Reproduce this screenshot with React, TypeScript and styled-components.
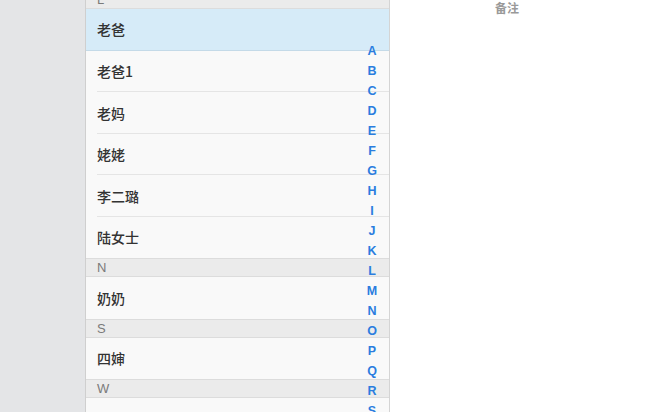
import React from "react"
import styled, { createGlobalStyle } from "styled-components"

const GlobalStyle = createGlobalStyle`
  html, body {
    margin: 0;
    padding: 0;
    overflow: hidden;
    background: #ffffff;
    font-family: "Liberation Sans", "Noto Sans CJK SC", sans-serif;
  }
`

const Page = styled.div`
  display: flex;
  height: 412px;
  width: 659px;
`

const Sidebar = styled.div`
  width: 85px;
  flex-shrink: 0;
  background: #e4e5e7;
`

const ListPanel = styled.div`
  position: relative;
  width: 303px;
  flex-shrink: 0;
  overflow: hidden;
  background: #f9f9f9;
  border-left: 1px solid #cfcfcf;
  border-right: 1px solid #d4d4d4;
`

const Scroller = styled.div`
  margin-top: -10px;
`

const SectionHeader = styled.div`
  box-sizing: border-box;
  height: 19px;
  padding-left: 11px;
  display: flex;
  align-items: center;
  background: #ebebeb;
  border-top: 1px solid #dcdcdc;
  border-bottom: 1px solid #dcdcdc;
  color: #7a7a7a;
  font-size: 13px;
`

const Row = styled.div<{ $active?: boolean; $last?: boolean }>`
  position: relative;
  box-sizing: border-box;
  height: 41.5px;
  padding-left: 11px;
  display: flex;
  align-items: center;
  background: ${p => (p.$active ? "#d6ebf8" : "transparent")};
  color: #333333;
  font-family: "Noto Sans CJK SC", "Liberation Sans", sans-serif;
  font-size: 14px;
  font-weight: 500;
  border-bottom: ${p => (p.$active ? "1px solid #c4dae8" : "none")};

  &::after {
    content: "";
    display: ${p => (p.$active || p.$last ? "none" : "block")};
    position: absolute;
    left: 11px;
    right: 0;
    bottom: 0;
    height: 1px;
    background: #e5e5e5;
  }
`

const IndexBar = styled.div`
  position: absolute;
  top: 41px;
  right: 7px;
  width: 20px;
  display: flex;
  flex-direction: column;
  align-items: center;
`

const IndexLetter = styled.span`
  height: 20px;
  line-height: 20px;
  color: #2a7ddf;
  font-size: 12.5px;
  font-weight: 700;
`

const Detail = styled.div`
  flex: 1;
  background: #ffffff;
`

const DetailHeader = styled.div`
  padding: 1px 0 0 105px;
  color: #999999;
  font-family: "Noto Sans CJK SC", sans-serif;
  font-size: 12px;
  font-weight: 700;
  line-height: 14px;
`

type Section = { letter: string; names: string[]; active?: number }

const sections: Section[] = [
  { letter: "L", names: ["老爸", "老爸1", "老妈", "姥姥", "李二璐", "陆女士"], active: 0 },
  { letter: "N", names: ["奶奶"] },
  { letter: "S", names: ["四婶"] },
  { letter: "W", names: ["王叔叔"] },
]

const letters = "ABCDEFGHIJKLMNOPQRS".split("")

export default function App() {
  return (
    <>
      <GlobalStyle />
      <Page>
        <Sidebar />
        <ListPanel>
          <Scroller>
            {sections.map(section => (
              <div key={section.letter}>
                <SectionHeader>{section.letter}</SectionHeader>
                {section.names.map((name, i) => (
                  <Row
                    key={name}
                    $active={section.active === i}
                    $last={i === section.names.length - 1}
                  >
                    {name}
                  </Row>
                ))}
              </div>
            ))}
          </Scroller>
          <IndexBar>
            {letters.map(l => (
              <IndexLetter key={l}>{l}</IndexLetter>
            ))}
          </IndexBar>
        </ListPanel>
        <Detail>
          <DetailHeader>备注</DetailHeader>
        </Detail>
      </Page>
    </>
  )
}
